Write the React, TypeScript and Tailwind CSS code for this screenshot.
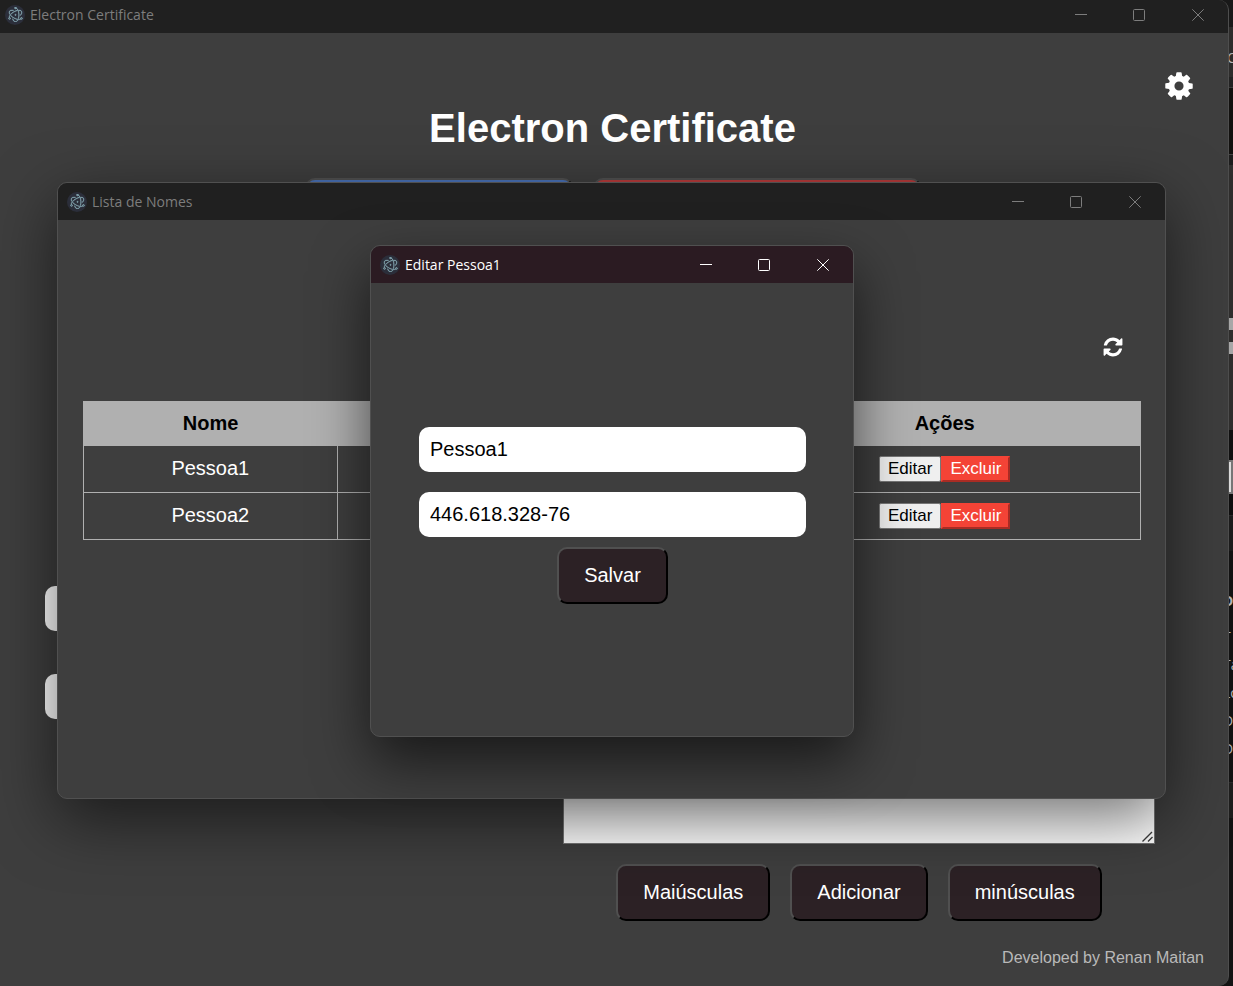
import type { ReactNode } from "react";
import { SiElectron } from "react-icons/si";

function WindowControls() {
  return (
    <div className="flex h-full">
      <button type="button" aria-label="Minimizar" className="flex w-[59px] items-center justify-center">
        <svg width="12" height="12" viewBox="0 0 12 12" fill="none" stroke="currentColor" aria-hidden="true">
          <path d="M0 5.5h12" />
        </svg>
      </button>
      <button type="button" aria-label="Maximizar" className="flex w-[58px] items-center justify-center">
        <svg width="12" height="12" viewBox="0 0 12 12" fill="none" stroke="currentColor" aria-hidden="true">
          <rect x="0.5" y="0.5" width="11" height="11" rx="1" />
        </svg>
      </button>
      <button type="button" aria-label="Fechar" className="flex w-[60px] items-center justify-center">
        <svg width="12" height="12" viewBox="0 0 12 12" fill="none" stroke="currentColor" aria-hidden="true">
          <path d="M0.3 0.3l11.4 11.4M11.7 0.3L0.3 11.7" />
        </svg>
      </button>
    </div>
  );
}

function TitleBar({ title, className }: { title: string; className: string }) {
  return (
    <header className={`flex shrink-0 items-center justify-between font-['Open_Sans','Noto_Sans',sans-serif] text-sm ${className}`}>
      <div className="flex items-center gap-[5px]">
        <span className="flex size-5 items-center justify-center rounded-full bg-[#2b2e3a] text-[#8fb3bd]">
          <SiElectron size={15} stroke="currentColor" strokeWidth={0.7} aria-hidden="true" />
        </span>
        <span>{title}</span>
      </div>
      <WindowControls />
    </header>
  );
}

function GearIcon() {
  return (
    <svg width="32" height="32" viewBox="0 0 1792 1792" fill="currentColor" aria-hidden="true">
      <path d="M1152 896q0-106-75-181t-181-75-181 75-75 181 75 181 181 75 181-75 75-181zm512-109v222q0 12-8 23t-20 13l-185 28q-19 54-39 91 35 50 107 138 10 12 10 25t-9 23q-27 37-99 108t-94 71q-12 0-26-9l-138-108q-44 23-91 38-16 136-29 186-7 28-36 28h-222q-14 0-24.5-8.5t-11.5-21.5l-28-184q-49-16-90-37l-141 107q-10 9-25 9-14 0-25-11-126-114-165-168-7-10-7-23 0-12 8-23 15-21 51-66.5t54-70.5q-27-50-41-99l-183-27q-13-2-21-12.5t-8-23.5v-222q0-12 8-23t19-13l186-28q14-46 39-92-40-57-107-138-10-12-10-24 0-10 9-23 26-36 98.5-107.5t94.5-71.5q13 0 26 10l138 107q44-23 91-38 16-136 29-186 7-28 36-28h222q14 0 24.5 8.5t11.5 21.5l28 184q49 16 90 37l142-107q9-9 24-9 13 0 25 10 129 119 165 170 7 8 7 22 0 12-8 23-15 21-51 66.5t-54 70.5q26 50 41 98l183 28q13 2 21 12.5t8 23.5z" />
    </svg>
  );
}

function RefreshIcon() {
  return (
    <svg width="22" height="22" viewBox="0 0 1792 1792" fill="currentColor" aria-hidden="true">
      <path d="M1639 1056q0 5-1 7-64 268-268 434.5t-478 166.5q-146 0-282.5-55t-243.5-157l-129 129q-19 19-45 19t-45-19-19-45v-448q0-26 19-45t45-19h448q26 0 45 19t19 45-19 45l-137 137q71 66 161 102t187 36q134 0 250-65t186-179q11-17 53-117 8-23 30-23h192q13 0 22.5 9.5t9.5 22.5zm25-800v448q0 26-19 45t-45 19h-448q-26 0-45-19t-19-45 19-45l138-138q-148-137-349-137-134 0-250 65t-186 179q-11 17-53 117-8 23-30 23h-199q-13 0-22.5-9.5t-9.5-22.5v-7q65-268 270-434.5t480-166.5q146 0 284 55.5t245 156.5l130-129q19-19 45-19t45 19 19 45z" />
    </svg>
  );
}

function DarkButton({ children }: { children: ReactNode }) {
  return (
    <button
      type="button"
      className="h-[57px] rounded-[10px] border-2 border-t-[#505050] border-r-black border-b-black border-l-[#505050] bg-[#2c2125] px-[25px] pb-[2px] text-xl text-white"
    >
      {children}
    </button>
  );
}

function MainWindow() {
  return (
    <section className="flex min-h-screen flex-1 flex-col overflow-hidden rounded-r-[10px] border-r border-[#4e4e4e] bg-[#3e3e3e]">
      <TitleBar title="Electron Certificate" className="h-[33px] bg-[#202020] pb-1 pl-[5px] text-[#7d7d7d]" />
      <main className="flex flex-1 flex-col">
        <div className="flex justify-end px-[33px] pt-[37px]">
          <button type="button" aria-label="Configurações" className="text-white">
            <GearIcon />
          </button>
        </div>
        <h1 className="mt-[3px] pr-[3px] text-center text-[40px] leading-[46px] font-bold text-white">Electron Certificate</h1>
        <div className="mt-[27px] flex justify-center gap-5 pr-[3px]">
          <button
            type="button"
            aria-label="Certificado"
            className="h-[57px] w-[268px] rounded-[10px] border-2 border-t-[#505050] border-r-black border-b-black border-l-[#505050] bg-[#4a72b8]"
          />
          <button
            type="button"
            aria-label="Lista de Nomes"
            className="h-[57px] w-[328px] rounded-[10px] border-2 border-t-[#505050] border-r-black border-b-black border-l-[#505050] bg-[#b83c3c]"
          />
        </div>
        <div className="mt-auto flex gap-[63px] pr-[73px] pl-[45px]">
          <div className="flex w-[455px] flex-col justify-center gap-[43px]">
            <input
              aria-label="Nome"
              className="h-[45px] w-full rounded-[10px] bg-white px-[11px] text-xl text-black"
            />
            <input
              aria-label="CPF"
              className="h-[45px] w-full rounded-[10px] bg-white px-[11px] text-xl text-black"
            />
          </div>
          <div className="flex flex-1 flex-col items-center gap-5">
            <div className="relative w-full">
              <textarea
                aria-label="Nomes"
                className="block h-[460px] w-full resize-none border border-[#767676] bg-white p-[2px] text-xl text-black"
              />
              <svg
                className="absolute right-[2px] bottom-[2px] text-[#3c3c3c]"
                width="11"
                height="11"
                viewBox="0 0 11 11"
                fill="none"
                stroke="currentColor"
                strokeWidth="1.4"
                aria-hidden="true"
              >
                <path d="M0.5 10.5l9.5-9.5M6 10.5l4.5-4.5" />
              </svg>
            </div>
            <div className="flex gap-5">
              <DarkButton>Maiúsculas</DarkButton>
              <DarkButton>Adicionar</DarkButton>
              <DarkButton>minúsculas</DarkButton>
            </div>
          </div>
        </div>
        <footer className="px-6 pt-[25px] pb-4 text-right text-base text-[#b9b9b9]">Developed by Renan Maitan</footer>
      </main>
    </section>
  );
}

const people = ["Pessoa1", "Pessoa2"];

function ListWindow() {
  return (
    <section className="absolute top-[182px] right-[67px] left-[57px] flex h-[617px] flex-col overflow-hidden rounded-[10px] border border-[#505050] bg-[#3e3e3e] shadow-[0_20px_64px_rgba(0,0,0,0.56)]">
      <TitleBar title="Lista de Nomes" className="h-[37px] bg-[#202020] pl-[9px] text-[#7d7d7d]" />
      <main className="flex flex-col pt-[116px] pr-6 pl-[25px]">
        <button type="button" aria-label="Atualizar" className="mr-[17px] self-end text-white">
          <RefreshIcon />
        </button>
        <table className="mt-[43px] w-full table-fixed border-collapse border border-[#b0b0b0] text-center text-xl text-white">
          <colgroup>
            <col className="w-[24%]" />
            <col className="w-[39%]" />
            <col className="w-[37%]" />
          </colgroup>
          <thead>
            <tr className="h-11 bg-[#b0b0b0] text-black">
              <th className="pb-[2px]">Nome</th>
              <th className="pb-[2px]">CPF</th>
              <th className="pb-[2px]">Ações</th>
            </tr>
          </thead>
          <tbody>
            {people.map((name) => (
              <tr key={name} className="h-[47px] border border-[#b0b0b0]">
                <td className="border border-[#b0b0b0] pb-[2px]">{name}</td>
                <td />
                <td>
                  <div className="flex justify-center">
                    <button
                      type="button"
                      className="h-[26px] rounded-[2px] border border-[#767676] bg-[#efefef] px-2 text-[17px] leading-[22px] text-black"
                    >
                      Editar
                    </button>
                    <button
                      type="button"
                      className="h-[26px] border-2 border-t-[#f44336] border-r-[#a92c24] border-b-[#a92c24] border-l-[#f44336] bg-[#f44336] px-[7px] text-[17px] leading-5 text-white"
                    >
                      Excluir
                    </button>
                  </div>
                </td>
              </tr>
            ))}
          </tbody>
        </table>
      </main>
    </section>
  );
}

function EditWindow() {
  return (
    <section className="absolute top-[245px] left-[370px] flex h-[492px] w-[484px] flex-col overflow-hidden rounded-[10px] border border-[#505050] bg-[#3e3e3e] shadow-[0_24px_56px_rgba(0,0,0,0.6)]">
      <TitleBar title="Editar Pessoa1" className="h-[37px] bg-[#2b1b22] pl-[9px] text-white" />
      <form className="flex flex-1 flex-col items-center pt-36 pr-[47px] pl-12">
        <input
          aria-label="Nome"
          defaultValue="Pessoa1"
          className="h-[45px] w-full rounded-[10px] bg-white px-[11px] text-xl text-black"
        />
        <input
          aria-label="CPF"
          defaultValue="446.618.328-76"
          className="mt-5 mb-[10px] h-[45px] w-full rounded-[10px] bg-white px-[11px] text-xl text-black"
        />
        <DarkButton>Salvar</DarkButton>
      </form>
    </section>
  );
}

/* Sliver of the window that stays open behind the main one. */
function BackgroundSliver() {
  return (
    <aside className="absolute inset-y-0 right-0 flex w-3 flex-col overflow-hidden bg-[#131313] font-['Open_Sans',sans-serif] text-sm text-[#b5b5b5]">
      <div className="h-[27px] shrink-0 bg-[#191919]" />
      <div className="flex h-[50px] shrink-0 items-center bg-[#2d2c2b] pt-3 pl-[6px]">C</div>
      <div className="h-[10px] shrink-0 bg-[#222222]" />
      <div className="h-[67px] shrink-0 border-t border-[#3a3a3a] bg-[#12110f]" />
      <div className="h-[11px] shrink-0 border-t border-[#444444] bg-[#1c1c1c]" />
      <div className="flex h-[265px] shrink-0 flex-col gap-3 bg-[#2f2e2d] pt-[153px]">
        <div className="h-3 shrink-0 bg-[#a9a9a9]" />
        <div className="h-3 shrink-0 bg-[#a9a9a9]" />
      </div>
      <div className="h-[30px] shrink-0 bg-[#111111]" />
      <div className="h-[34px] shrink-0 border-2 border-[#777777] bg-[#dddddd]" />
      <div className="h-[21px] shrink-0 bg-[#0f0f0f]" />
      <div className="h-9 shrink-0 border-t border-[#2a2a2a] bg-[#1c1c1c]" />
      <div className="flex h-[231px] shrink-0 flex-col bg-[#131313] pt-9 pl-[2px] leading-7">
        <strong className="pb-2">D</strong>
        <span>T</span>
        <span>Ta</span>
        <span>Lo</span>
        <span>D</span>
        <span>D</span>
      </div>
      <div className="h-9 shrink-0 border-t border-[#2a2a2a] bg-[#1e1e1d]" />
    </aside>
  );
}

export default function App() {
  return (
    <div className="relative flex min-h-screen overflow-hidden bg-[#161616] pr-1 font-['Liberation_Sans',Arial,sans-serif]">
      <BackgroundSliver />
      <div className="relative flex flex-1">
        <MainWindow />
      </div>
      <ListWindow />
      <EditWindow />
    </div>
  );
}
